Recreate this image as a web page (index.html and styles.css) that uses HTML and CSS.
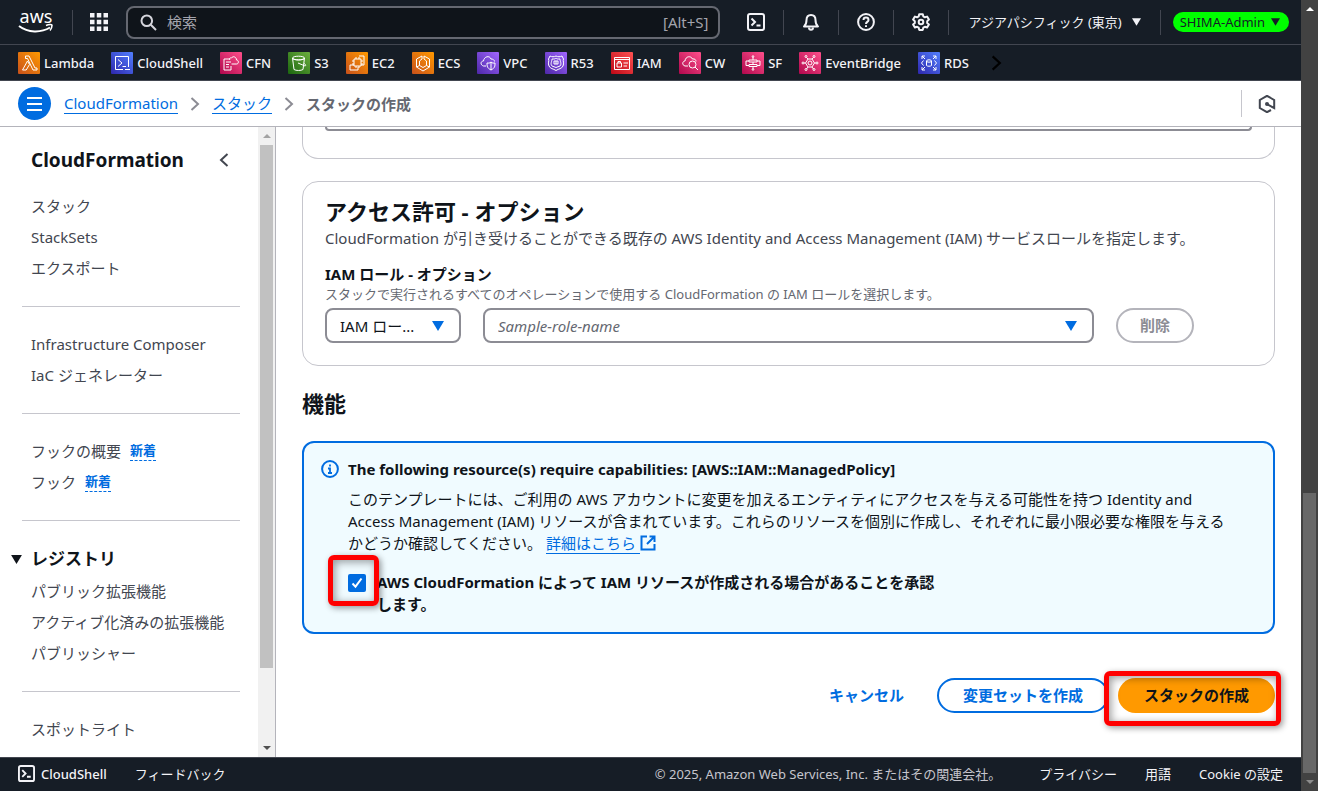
FILE: index.html
```html
<!DOCTYPE html>
<html lang="ja">
<head>
<meta charset="utf-8">
<title>スタックの作成 - CloudFormation</title>
<link rel="stylesheet" href="styles.css">
</head>
<body>
<svg class="defs" width="0" height="0" aria-hidden="true">
  <defs>
    <linearGradient id="g-orange" x1="0" y1="1" x2="1" y2="0"><stop offset="0" stop-color="#c8511b"/><stop offset="1" stop-color="#ff9900"/></linearGradient>
    <linearGradient id="g-blue" x1="0" y1="1" x2="1" y2="0"><stop offset="0" stop-color="#2e27ad"/><stop offset="1" stop-color="#527fff"/></linearGradient>
    <linearGradient id="g-pink" x1="0" y1="1" x2="1" y2="0"><stop offset="0" stop-color="#b0084d"/><stop offset="1" stop-color="#ff4f8b"/></linearGradient>
    <linearGradient id="g-green" x1="0" y1="1" x2="1" y2="0"><stop offset="0" stop-color="#1b660f"/><stop offset="1" stop-color="#6cae3e"/></linearGradient>
    <linearGradient id="g-purple" x1="0" y1="1" x2="1" y2="0"><stop offset="0" stop-color="#4d27a8"/><stop offset="1" stop-color="#a166ff"/></linearGradient>
    <linearGradient id="g-red" x1="0" y1="1" x2="1" y2="0"><stop offset="0" stop-color="#bd0816"/><stop offset="1" stop-color="#ff5252"/></linearGradient>
    <symbol id="terminal" viewBox="0 0 18 18"><rect x="1" y="1" width="16" height="16" rx="2" fill="none" stroke="currentColor" stroke-width="2"/><path d="M4.500 5.500 8 9l-3.500 3.500M9.500 12.500h4" fill="none" stroke="currentColor" stroke-width="2"/></symbol>
    <symbol id="down" viewBox="0 0 12 10"><path d="M0 0h12L6 10z" fill="currentColor"/></symbol>
    <symbol id="next" viewBox="0 0 10 16"><path d="m1.500 2 6.500 6-6.500 6" fill="none" stroke="currentColor" stroke-width="2"/></symbol>
  </defs>
</svg>
<div class="window">
  <div class="page">
    <header class="topbar">
      <a class="logo" href="#" aria-label="AWS">
        <svg width="36" height="26" viewBox="0 0 36 26"><text x="18" y="14" text-anchor="middle" class="logo-text">aws</text><path d="M1 17c9 7 22 7 31 1.500" fill="none" stroke="#fff" stroke-width="2"/><path d="M28 16.500c3-1.200 6-1.200 6-.2s-.4 3.400-2 5.200" fill="none" stroke="#fff" stroke-width="1.600"/></svg>
      </a>
      <span class="divider"></span>
      <button class="icon-button apps" aria-label="サービス">
        <svg width="18" height="18" viewBox="0 0 18 18" fill="#f3f3f7"><path d="M0 0h4.500v4.500H0zM6.800 0h4.500v4.500H6.800zM13.500 0H18v4.500h-4.500zM0 6.800h4.500v4.500H0zM6.800 6.800h4.500v4.500H6.800zM13.500 6.800H18v4.500h-4.500zM0 13.500h4.500V18H0zM6.800 13.500h4.500V18H6.800zM13.500 13.500H18V18h-4.500z"/></svg>
      </button>
      <label class="search">
        <svg width="17" height="17" viewBox="0 0 17 17" fill="none" stroke="#d5d5dc" stroke-width="2"><circle cx="6.800" cy="6.800" r="5.300"/><path d="m10.800 10.800 5.200 5.200"/></svg>
        <input type="search" placeholder="検索" aria-label="検索">
        <span class="shortcut">[Alt+S]</span>
      </label>
      <div class="tools">
        <button class="icon-button" aria-label="CloudShell"><svg width="18" height="18"><use href="#terminal"/></svg></button>
        <span class="divider"></span>
        <button class="icon-button" aria-label="通知"><svg width="18" height="18" viewBox="0 0 18 18" fill="none" stroke="currentColor" stroke-width="2"><path d="M2 13.500c2-1.500 2.500-3 2.500-6.500 0-3.500 2-5 4.500-5s4.500 1.500 4.500 5c0 3.500.5 5 2.500 6.500z" stroke-linejoin="round"/><path d="M7 14.500c0 3 4 3 4 0"/></svg></button>
        <span class="divider"></span>
        <button class="icon-button" aria-label="ヘルプ"><svg width="18" height="18" viewBox="0 0 18 18" fill="none" stroke="currentColor" stroke-width="2"><circle cx="9" cy="9" r="7.900"/><path d="M6.500 7c0-3.200 5-3.200 5 0 0 2-2.500 1.800-2.500 4M9 12.200v1.900"/></svg></button>
        <span class="divider"></span>
        <button class="icon-button" aria-label="設定"><svg width="18" height="18" viewBox="0 0 18 18" fill="none" stroke="currentColor" stroke-width="2" stroke-linejoin="round"><path d="M7.200 1.200h3.600l.5 2.200 1.600.9 2.200-.7 1.800 3-1.700 1.600v1.700l1.700 1.500-1.800 3.100-2.200-.7-1.600.9-.5 2.200H7.200l-.5-2.200-1.600-.9-2.200.7-1.800-3.100 1.700-1.500V8.200L1.100 6.600l1.800-3 2.200.7 1.600-.9z"/><circle cx="9" cy="9" r="2.300"/></svg></button>
        <span class="divider"></span>
        <button class="region">アジアパシフィック (東京) <svg width="9" height="8"><use href="#down"/></svg></button>
        <span class="divider"></span>
        <button class="account">SHIMA-Admin <svg width="9" height="8"><use href="#down"/></svg></button>
      </div>
    </header>

    <nav class="favorites" aria-label="お気に入り">
      <a href="#"><svg viewBox="0 0 22 22"><rect width="22" height="22" rx="1" fill="url(#g-orange)"/><path d="M4.500 18 9.500 9l2 3.500L8.200 18zM7.500 4H11l6 12h2v2h-4L9.500 6.500h-2z"/></svg>Lambda</a>
      <a href="#"><svg viewBox="0 0 22 22"><rect width="22" height="22" rx="1" fill="url(#g-blue)"/><path d="M12 17.500H4.500v-13h13V15M7 7.500l4 3.500-4 3.500M11.500 14.500H15M14 17.500h5"/></svg>CloudShell</a>
      <a href="#"><svg viewBox="0 0 22 22"><rect width="22" height="22" rx="1" fill="url(#g-pink)"/><path d="M11 14v4H4V7h6M6 10h5M6 12.500h3M6 15h3M11.500 12h5c2.500 0 2.500-4 0-4 0-3-3.500-4.500-5-2C9.500 5.500 9 7 10 8"/></svg>CFN</a>
      <a href="#"><svg viewBox="0 0 22 22"><rect width="22" height="22" rx="1" fill="url(#g-green)"/><path d="m4.500 6 1.500 11.500c2 1.300 7 1.300 9 0L16.500 6M4.500 6.500c2 2 10 2 12 0M10 11l7 3c1.500-.5.500-1.800-1-2.500"/><ellipse cx="10.500" cy="6" rx="6" ry="1.800"/></svg>S3</a>
      <a href="#"><svg viewBox="0 0 22 22"><rect width="22" height="22" rx="1" fill="url(#g-orange)"/><path d="M8 13H4v5h8v-3M13 4h5v9h-3M8 7h7v7H8zM10 5v2M13 5v2M6 9h2M6 12h2M10 14v2M13 14v2M15 9h2M15 12h2"/></svg>EC2</a>
      <a href="#"><svg viewBox="0 0 22 22"><rect width="22" height="22" rx="1" fill="url(#g-orange)"/><path d="M10 4 4.500 7v8l6.500 4 6.500-4V7L12 4v3l2.500 2v4.500L11 15.500 7.500 13.500V9L10 7zM14.500 13.500l3 1.500M7.500 13.500 4.500 15"/></svg>ECS</a>
      <a href="#"><svg viewBox="0 0 22 22"><rect width="22" height="22" rx="1" fill="url(#g-purple)"/><path d="M9 14H6.500c-3.500-1-3-5 0-5C7 4.500 12.500 3 14 7c2 0 3.500 1 3.500 2.500M14 10c1.500 1.500 2.500 1 4 1 0 3 0 5-4 7-4-2-4-4-4-7 1.500 0 2.500.5 4-1v8"/></svg>VPC</a>
      <a href="#"><svg viewBox="0 0 22 22"><rect width="22" height="22" rx="1" fill="url(#g-purple)"/><path d="M5 4c2 1 4 1 6 0 2 1 4 1 6 0l1.500 3c-1 2 1 4-.5 7s-4 2.500-7 4.500c-3-2-5.500-1.500-7-4.500s.5-5-.5-7zM7 7c3 0 3 0 4-1 1 1 1 1 4 1 0 2 2 5 0 7l-4 1.500L7 14c-2-2 0-5 0-7zM9 9v3h4V9zM11 9v3"/></svg>R53</a>
      <a href="#"><svg viewBox="0 0 22 22"><rect width="22" height="22" rx="1" fill="url(#g-red)"/><path d="M3.500 5.500h15v12h-15zM3.500 7.500h15M6 11h4.500v4H6zM7 11V9.500h2.500V11M12.500 11H17M12.500 14H16"/></svg>IAM</a>
      <a href="#"><svg viewBox="0 0 22 22"><rect width="22" height="22" rx="1" fill="url(#g-pink)"/><path d="M9 14H6c-3.500-1-2.500-5 0-5 .5-5 6-5.500 7.500-2C16 6.500 17 8 17 9.500"/><circle cx="13.500" cy="12.500" r="3.500"/><path d="m16 15 3 3"/></svg>CW</a>
      <a href="#"><svg viewBox="0 0 22 22"><rect width="22" height="22" rx="1" fill="url(#g-pink)"/><path d="M7 8h8v2H7zM7 12.500h8v2H7zM11 5v3M11 10v2.500M11 14.500V17M7 9H4v4.500h3M15 9h3v4.500h-3"/><circle cx="11" cy="4.500" r=".8"/><circle cx="11" cy="17.500" r=".8"/></svg>SF</a>
      <a href="#"><svg viewBox="0 0 22 22"><rect width="22" height="22" rx="1" fill="url(#g-pink)"/><path d="m9 7 4 0 2.500 4L13 15H9l-2.500-4zM9 7 7.500 5.500M13 7l1.500-1.500M9 15l-1.500 2M13 15l1.500 2M6.500 11H5M15.500 11H17"/><circle cx="11" cy="11" r="2"/><circle cx="7" cy="4.500" r="1"/><circle cx="15" cy="4.500" r="1"/><circle cx="7" cy="17.500" r="1"/><circle cx="15" cy="17.500" r="1"/><circle cx="4" cy="11" r="1"/><circle cx="18" cy="11" r="1"/></svg>EventBridge</a>
      <a href="#"><svg viewBox="0 0 22 22"><rect width="22" height="22" rx="1" fill="url(#g-blue)"/><path d="M4 7V4h3M4 4l3 3M15 4h3v3M18 4l-3 3M4 15v3h3M4 18l3-3M15 18h3v-3M18 18l-3-3M5.500 8.500 3.500 11l2 2.500M16.500 8.500l2 2.500-2 2.500M8.500 9v4.500c1 1 4 1 5 0V9"/><ellipse cx="11" cy="9" rx="2.500" ry="1.200"/></svg>RDS</a>
      <button class="more" aria-label="次へ"><svg viewBox="0 0 10 16"><use href="#next"/></svg></button>
    </nav>

    <div class="crumbs">
      <button class="menu" aria-label="メニュー"><svg width="15" height="14" viewBox="0 0 15 14"><path d="M0 1h15M0 7h15M0 13h15" stroke="#fff" stroke-width="2"/></svg></button>
      <nav class="trail" aria-label="パンくずリスト">
        <a href="#">CloudFormation</a>
        <svg width="10" height="16"><use href="#next"/></svg>
        <a href="#">スタック</a>
        <svg width="10" height="16"><use href="#next"/></svg>
        <strong>スタックの作成</strong>
      </nav>
      <button class="assist" aria-label="情報パネル"><svg width="18" height="18" viewBox="0 0 18 18" fill="none" stroke="currentColor" stroke-width="2"><path d="M13 15 9 17.200 1.800 13V5L9 .8 16.200 5v8L9 9.200"/><circle cx="9" cy="9" r="2" fill="currentColor" stroke="none"/></svg></button>
    </div>

    <div class="body">
      <aside class="side">
        <nav class="side-nav" aria-label="CloudFormation">
          <div class="side-head">
            <h2>CloudFormation</h2>
            <button class="collapse" aria-label="閉じる"><svg width="10" height="14" viewBox="0 0 10 14"><path d="M8.500 1 2 7l6.500 6" fill="none" stroke="currentColor" stroke-width="2"/></svg></button>
          </div>
          <ul>
            <li><a href="#">スタック</a></li>
            <li><a href="#">StackSets</a></li>
            <li><a href="#">エクスポート</a></li>
          </ul>
          <hr>
          <ul>
            <li><a href="#">Infrastructure Composer</a></li>
            <li><a href="#">IaC ジェネレーター</a></li>
          </ul>
          <hr>
          <ul>
            <li><a href="#">フックの概要</a><button class="new">新着</button></li>
            <li><a href="#">フック</a><button class="new">新着</button></li>
          </ul>
          <hr>
          <button class="section"><svg width="11" height="9" viewBox="0 0 12 10"><use href="#down"/></svg>レジストリ</button>
          <ul class="nested">
            <li><a href="#">パブリック拡張機能</a></li>
            <li><a href="#">アクティブ化済みの拡張機能</a></li>
            <li><a href="#">パブリッシャー</a></li>
          </ul>
          <hr>
          <ul>
            <li><a href="#">スポットライト</a></li>
          </ul>
        </nav>
        <div class="scrollbar light" aria-hidden="true"><i class="up"></i><b></b><i class="down"></i></div>
      </aside>

      <main class="content">
        <section class="card tail"><div class="field-end"></div></section>

        <section class="card">
          <h2>アクセス許可 - オプション</h2>
          <p class="description">CloudFormation が引き受けることができる既存の AWS Identity and Access Management (IAM) サービスロールを指定します。</p>
          <label class="field-label" for="role">IAM ロール - オプション</label>
          <p class="hint">スタックで実行されるすべてのオペレーションで使用する CloudFormation の IAM ロールを選択します。</p>
          <div class="role-row">
            <div class="select kind"><select aria-label="ロールの指定方法"><option>IAM ロー...</option></select><svg width="12" height="10"><use href="#down"/></svg></div>
            <div class="select name"><select id="role"><option>Sample-role-name</option></select><svg width="12" height="10"><use href="#down"/></svg></div>
            <button class="button" disabled>削除</button>
          </div>
        </section>

        <h2 class="heading">機能</h2>

        <section class="alert">
          <svg class="info" width="18" height="18" viewBox="0 0 18 18" fill="none" stroke="currentColor" stroke-width="2"><circle cx="9" cy="9" r="7.900"/><path d="M9 4.500v2M7 8.500h2v5M7 13h4" stroke-width="1.800"/></svg>
          <div class="alert-body">
            <h3>The following resource(s) require capabilities: [AWS::IAM::ManagedPolicy]</h3>
            <p>このテンプレートには、ご利用の AWS アカウントに変更を加えるエンティティにアクセスを与える可能性を持つ Identity and<br>Access Management (IAM) リソースが含まれています。これらのリソースを個別に作成し、それぞれに最小限必要な権限を与える<br>かどうか確認してください。 <a href="#">詳細はこちら </a><svg class="external" width="16" height="16" viewBox="0 0 16 16" fill="none" stroke="currentColor" stroke-width="2"><path d="M7 1.500H1.500v13h13V9M9.500 1.500h5V7M14 2 7 9"/></svg></p>
            <div class="ack">
              <span class="tick"><input type="checkbox" id="ack" checked><svg viewBox="0 0 18 18"><path d="m4.500 9.500 3 3.200 6-8.200" fill="none" stroke="#fff" stroke-width="2"/></svg><span class="mark mark-tick"></span></span>
              <label for="ack">AWS CloudFormation によって IAM リソースが作成される場合があることを承認<br>します。</label>
            </div>
          </div>
        </section>

        <div class="actions">
          <button class="button link">キャンセル</button>
          <button class="button outline">変更セットを作成</button>
          <span class="submit"><button class="button primary">スタックの作成</button><span class="mark mark-submit"></span></span>
        </div>
      </main>
    </div>

    <footer class="footer">
      <button class="shell"><svg width="17" height="17"><use href="#terminal"/></svg>CloudShell</button>
      <button>フィードバック</button>
      <span class="copyright">© 2025, Amazon Web Services, Inc. またはその関連会社。</span>
      <a href="#">プライバシー</a>
      <a href="#">用語</a>
      <a href="#">Cookie の設定</a>
    </footer>
  </div>
  <div class="scrollbar dark" aria-hidden="true"><i class="up"></i><b></b><i class="down"></i></div>
</div>
</body>
</html>
```

FILE: styles.css
```css
* { box-sizing: border-box; }

body {
  margin: 0;
  background: #fff;
  color: #0f141a;
  font: 15px/22px "Noto Sans", "Noto Sans CJK JP", sans-serif;
}

h2, h3, p, ul { margin: 0; padding: 0; }
ul { list-style: none; }
svg { flex: none; }
button, input, select { font: inherit; color: inherit; }
button { padding: 0; border: 0; background: none; cursor: pointer; }
a { color: inherit; text-decoration: none; }

.defs { position: absolute; }

.window { display: flex; height: 100vh; overflow: hidden; }
.page { flex: 1; min-width: 0; display: flex; flex-direction: column; }

/* Global header */
.topbar {
  display: flex;
  align-items: center;
  height: 45px;
  padding: 0 12px 0 18px;
  border-bottom: 1px solid #424650;
  background: #161d26;
  color: #f3f3f7;
}
.logo { display: flex; }
.logo svg { overflow: visible; }
.logo-text { fill: #fff; font-size: 18px; }
.divider { width: 1px; height: 25px; background: #424650; }
.logo + .divider { margin-left: 18px; }
.icon-button { display: flex; justify-content: center; width: 54px; }
.icon-button.apps { width: 53px; padding-right: 2px; }
.search {
  flex: 1;
  display: flex;
  align-items: center;
  gap: 10px;
  height: 33px;
  padding: 0 9px 0 12px;
  border: 2px solid #656871;
  border-radius: 8px;
  background: #0f141a;
}
.search input { flex: 1; min-width: 0; padding: 0; border: 0; outline: 0; background: none; }
.search input::placeholder { color: #a4a4ad; opacity: 1; }
.shortcut { color: #a4a4ad; }
.tools { display: flex; align-items: center; padding-left: 9px; font-size: 13px; }
.region { display: flex; align-items: center; gap: 10px; padding: 0 19px 0 20px; }
.account {
  display: flex;
  align-items: center;
  gap: 6px;
  height: 20px;
  margin-left: 12px;
  padding: 0 9px 0 7px;
  border-radius: 10px;
  background: #0f0;
  color: #161d26;
}

/* Favourites bar */
.favorites {
  display: flex;
  align-items: center;
  gap: 17px;
  height: 36px;
  padding-left: 18px;
  border-bottom: 1px solid #424650;
  background: #161d26;
  color: #f3f3f7;
  font-size: 13px;
  font-weight: 500;
}
.favorites a { display: flex; align-items: center; gap: 4px; }
.favorites a svg { width: 22px; height: 22px; fill: none; stroke: #fff; stroke-width: 1; }
.favorites rect { stroke: none; }
.more { display: flex; margin-left: 5px; color: #000; }
.more svg { width: 11px; height: 18px; }

/* Breadcrumbs */
.crumbs {
  display: flex;
  align-items: center;
  height: 46px;
  padding: 0 25px 0 18px;
  border-bottom: 1px solid #b4b4bb;
}
.menu {
  display: grid;
  place-items: center;
  width: 33px;
  height: 33px;
  border-radius: 50%;
  background: #006ce0;
}
.trail { flex: 1; display: flex; align-items: center; gap: 12px; padding-left: 13px; color: #656871; }
.trail a { color: #006ce0; line-height: 20px; border-bottom: 1px solid #006ce0; }
.trail svg { color: #8c8c94; }
.assist { display: flex; align-items: center; height: 27px; padding-left: 16px; border-left: 1px solid #c6c6cd; color: #424650; }

/* Side navigation */
.body { flex: 1; display: flex; min-height: 0; }
.side { flex: none; display: flex; width: 276px; border-right: 1px solid #b4b4bb; }
.side-nav { flex: 1; padding: 20px 18px 0 22px; overflow: hidden; color: #424650; }
.side-head { display: flex; align-items: center; justify-content: space-between; padding: 0 11px 0 9px; margin-bottom: 22px; }
.side-head h2 { color: #0f141a; font-size: 19px; line-height: 26px; }
.collapse { display: flex; color: #424650; }
.side-nav li { display: flex; align-items: center; gap: 9px; height: 22px; margin-bottom: 9px; padding-left: 9px; white-space: nowrap; }
.side-nav hr { margin: 27px 0 26px; border: 0; border-top: 1px solid #c6c6cd; }
.new { color: #006ce0; font-size: 13px; font-weight: 700; line-height: 19px; border-bottom: 1px dashed #006ce0; }
.section { display: flex; align-items: center; gap: 9px; margin: 0 0 9px -11px; color: #0f141a; font-size: 17px; font-weight: 700; line-height: 24px; }

/* Scrollbars */
.scrollbar { flex: none; display: flex; flex-direction: column; align-items: center; width: 17px; }
.scrollbar i { width: 0; height: 0; margin: 7px 0; border: 4px solid transparent; }
.scrollbar .up { border-top: 0; border-bottom-color: currentColor; }
.scrollbar .down { border-bottom: 0; border-top-color: currentColor; }
.scrollbar b { width: 13px; }
.light { background: #f1f1f1; color: #505050; }
.light .up { border-bottom-color: #a3a3a3; }
.light b { flex: 0 0 83%; background: #c1c1c1; }
.light .down { margin-top: auto; }
.dark { background: #424242; color: #8c8c8c; }
.dark .up { border-bottom-color: #fff; }
.dark b { flex: 0 0 280px; margin-top: auto; background: #686868; }

/* Main content */
.content { flex: 1; min-width: 0; padding: 0 26px; overflow: hidden; }
.card { padding: 15px 22px 22px; border: 1px solid #c6c6cd; border-radius: 16px; }
.card.tail { margin-bottom: 22px; padding: 0 22px 27px; border-top: 0; border-radius: 0 0 16px 16px; }
.field-end { height: 4px; border: 2px solid #8c8c94; border-top: 0; border-radius: 0 0 8px 8px; }
.card h2, .heading { font-size: 22px; line-height: 28px; }
.card h2 { margin-bottom: 2px; }
.description { color: #424650; }
.field-label { display: block; margin-top: 15px; font-weight: 700; line-height: 20px; }
.hint { margin-bottom: 4px; color: #656871; font-size: 13px; line-height: 20px; }
.role-row { display: grid; grid-template-columns: 136px minmax(0, 1fr) 136px; gap: 22px; align-items: center; }
.select { display: grid; align-items: center; }
.select select {
  grid-area: 1 / 1;
  width: 100%;
  height: 35px;
  padding: 0 38px 0 13px;
  border: 2px solid #8c8c94;
  border-radius: 8px;
  background: #fff;
  appearance: none;
}
.select svg { grid-area: 1 / 1; justify-self: end; margin-right: 17px; color: #006ce0; pointer-events: none; }
.name select { color: #656871; font-style: italic; }
.button { height: 35px; padding: 0 22px 2px; border: 2px solid transparent; border-radius: 18px; font-weight: 700; white-space: nowrap; }
.button:disabled { justify-self: start; border-color: #b4b4bb; color: #8c8c94; }
.heading { margin: 23px 0 24px; }

.alert {
  display: flex;
  gap: 9px;
  padding: 15px 17px 17px;
  border: 2px solid #006ce0;
  border-radius: 12px;
  background: #f0fbff;
}
.info { margin-top: 2px; color: #006ce0; }
.alert-body { min-width: 0; }
.alert h3 { margin-bottom: 8px; font-size: 15px; line-height: 22px; }
.alert p { white-space: nowrap; }
.alert a { color: #006ce0; border-bottom: 1px solid #006ce0; white-space: pre; }
.external { color: #006ce0; vertical-align: -2px; }
.ack { display: flex; gap: 11px; margin-top: 17px; font-weight: 700; }
.tick { position: relative; display: grid; width: 18px; height: 18px; margin-top: 3px; }
.tick input { grid-area: 1 / 1; width: 18px; height: 18px; margin: 0; border-radius: 2px; background: #006ce0; appearance: none; }
.tick svg { grid-area: 1 / 1; pointer-events: none; }

/* Red callouts over the controls */
.mark {
  position: absolute;
  z-index: 1;
  border: 5px solid #f00;
  border-radius: 6px;
  box-shadow: 2px 2px 6px rgba(0, 0, 0, .4), inset 2px 2px 8px rgba(0, 0, 0, .4);
  pointer-events: none;
}
.mark-tick { inset: -19px -13px -14px -20px; }
.mark-submit { inset: -7px -6px -13px -14px; }

.actions { display: flex; justify-content: flex-end; margin-top: 44px; }
.link { color: #006ce0; }
.outline { margin: 0 9px; border-color: #006ce0; color: #006ce0; }
.submit { position: relative; }
.outline, .primary { padding: 0 24px 2px; }
.primary { background: #f90; }

/* Footer */
.footer {
  display: flex;
  align-items: center;
  gap: 28px;
  height: 34px;
  padding: 0 18px 2px;
  border-top: 1px solid #424650;
  background: #161d26;
  color: #f3f3f7;
  font-size: 13px;
}
.shell { display: flex; align-items: center; gap: 6px; font-weight: 500; }
.copyright { margin-left: auto; margin-right: 10px; color: #c6c6cd; }
```
